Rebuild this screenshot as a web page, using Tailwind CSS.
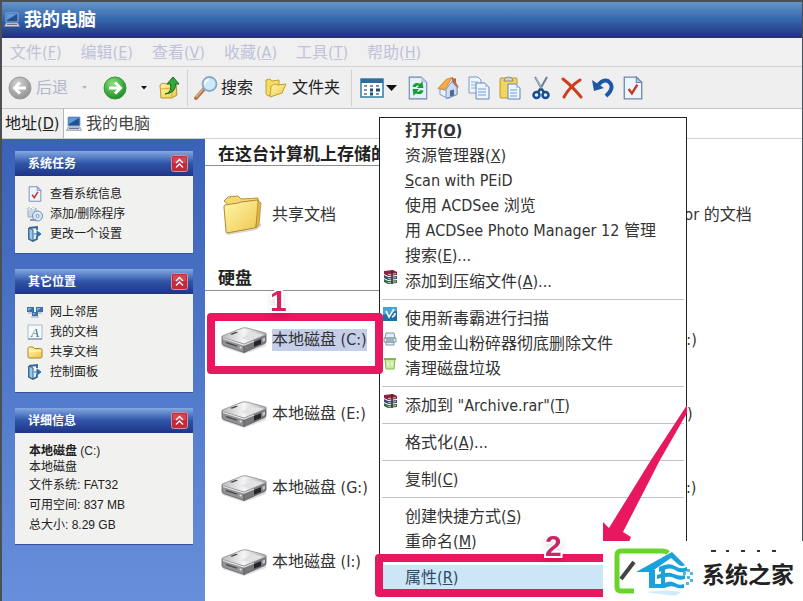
<!DOCTYPE html>
<html lang="zh-CN">
<head>
    <meta charset="UTF-8">
    <meta name="viewport" content="width=device-width, initial-scale=1.0">
    <title>我的电脑</title>
    <script src="https://cdn.jsdelivr.net/npm/@tailwindcss/browser@4"></script>
</head>
<body class="bg-white font-['DejaVu_Sans_Condensed','Noto_Sans','Noto_Sans_CJK_SC',sans-serif] text-base text-[#333]">

    <!-- Shared icons -->
    <svg class="absolute size-0" aria-hidden="true">
        <defs>
            <linearGradient id="gFolder" x1="0" y1="0" x2="1" y2="1"><stop offset="0" stop-color="#fff7ad"/><stop offset="1" stop-color="#efc64b"/></linearGradient>
            <linearGradient id="gDrive" x1="0" y1="0" x2="1" y2="0"><stop offset="0" stop-color="#b9b9bb"/><stop offset=".5" stop-color="#f5f5f5"/><stop offset="1" stop-color="#a9a9ac"/></linearGradient>
            <radialGradient id="gGreen" cx=".4" cy=".3" r=".75"><stop offset="0" stop-color="#8be07c"/><stop offset="1" stop-color="#158a1c"/></radialGradient>
            <radialGradient id="gGray" cx=".4" cy=".3" r=".75"><stop offset="0" stop-color="#d2d2d2"/><stop offset="1" stop-color="#8f8f8f"/></radialGradient>
        </defs>
        <symbol id="computer" viewBox="0 0 16 16">
            <path d="M2 1h12v9H2z" fill="#26508f" stroke="#8fb3dc"/>
            <path d="M3 2h10L3 8z" fill="#5e9ad6"/>
            <path d="M2 11h12l1.500 3.500H.5z" fill="#c9d2de" stroke="#7f8da2" stroke-width=".6"/>
            <path d="M3 12.500h10" stroke="#6c7686"/>
        </symbol>
        <symbol id="drive" viewBox="0 0 46 27">
            <path d="M1 17l22 8 22-9v3L23 27 2 20z" fill="#bbb" opacity=".5"/>
            <path d="M1 10.500L23 17v8.500L2.500 18.500Q1 18 1 16.500z" fill="#929296" stroke="#66666a" stroke-width=".8"/>
            <path d="M23 17l22-9v6.500q0 1.500-1.500 2L23 25.500z" fill="#77777b" stroke="#5a5a5e" stroke-width=".8"/>
            <path d="M1 10.500Q0 9.500 2 8.700L20 1.500q3-1.200 6-.5l17 4.500q3.500 1 2 2.500L23 17z" fill="url(#gDrive)" stroke="#8b8b8f" stroke-width=".8"/>
            <path d="M2 11.500L23 18l10-4" fill="none" stroke="#e6e6e6" stroke-width="1.200"/>
            <path d="M9 7l6-2.200 2 .6-6 2.300z" fill="#47474b"/>
            <path d="M31 5l12 2.800-14 5.800-9-2.400z" fill="#e2e2e4"/>
            <path d="M33 15l7-2.700v4.700l-7 2.800z" fill="#252529"/>
            <path d="M41.500 11.500l2.500-1v3.500l-2.500 1z" fill="#c5c5c8"/>
            <path d="M5 15.500l11 3.700" stroke="#4e4e52" stroke-width="1.400"/>
            <circle cx="19.500" cy="20.500" r="1" fill="#e8e8e8"/>
        </symbol>
        <symbol id="chevrons" viewBox="0 0 17 17">
            <rect x=".5" y=".5" width="16" height="16" rx="2" fill="#c02a3a" stroke="#d98f9a"/>
            <path d="M2 2h13v6H2z" fill="#d65362" opacity=".7"/>
            <path d="M5 8l3.500-3.500L12 8M5 12.500L8.500 9l3.500 3.500" fill="none" stroke="#fff" stroke-width="1.300"/>
        </symbol>
        <symbol id="settings" viewBox="0 0 16 16">
            <path d="M2 2l8-1v3M10 10v3l-4 2-4-2V2" fill="#dfeefa" stroke="#33658f" stroke-width="1.800"/>
            <path d="M2 2l4 2v11l-4-2z" fill="#9cc6e8" stroke="#33658f"/>
            <path d="M7 8h5M10 5l4 3-4 3z" fill="#2f6ea6" stroke="#2f6ea6"/>
        </symbol>
        <symbol id="folder" viewBox="0 0 16 14">
            <path d="M1 3.500Q1 2 2.500 2H6l1.500 1.500h6q1.500 0 1.500 1.500v6.500q0 1.500-1.500 1.500h-11Q1 13 1 11.500z" fill="url(#gFolder)" stroke="#a98421"/>
            <path d="M1.500 6h13" stroke="#fffbd0"/>
        </symbol>
        <symbol id="check" viewBox="0 0 18 22">
            <path d="M1 1h11l5 5v15H1z" fill="#eef4fc" stroke="#6f86ad" stroke-width="1.200"/>
            <path d="M12 1v5h5z" fill="#b9cbe6" stroke="#6f86ad"/>
            <path d="M5 12l3 4 5-8" fill="none" stroke="#c9362a" stroke-width="2.200"/>
        </symbol>
        <symbol id="rar" viewBox="0 0 14 14">
            <path d="M1 1l9-1 4 2v3L5 6 1 4z" fill="#8d2440"/>
            <path d="M1 5l4 2 9-1v3l-9 1-4-2z" fill="#3b4a78"/>
            <path d="M1 9l4 2 9-1v3l-9 1-4-2z" fill="#316a3f"/>
            <path d="M5 4.500l8-.8M5 8.500l8-.8M5 12.500l8-.8" stroke="#e7d9d9" stroke-width=".8"/>
            <path d="M8 0l2 .5V14H8z" fill="#3a2522" opacity=".7"/>
        </symbol>
    </svg>

    <div class="relative flex h-screen flex-col overflow-hidden border-t-2 border-r border-l-2 border-[#4b5054]">

        <!-- Title bar -->
        <header class="flex h-9 shrink-0 items-center gap-1 bg-linear-to-b from-[#6594c8] via-[#3365ab] to-[#232f7d] pl-[2px] text-white">
            <svg class="size-4"><use href="#computer"/></svg>
            <h1 class="text-lg leading-6 font-bold">我的电脑</h1>
        </header>

        <!-- Menu bar -->
        <nav class="flex h-[29px] shrink-0 items-center gap-[19px] border-b border-[#d4d4d4] bg-[#f0f0f1] pt-px pl-2 text-[#bfc2d8]">
            <button>文件(<u>F</u>)</button>
            <button>编辑(<u>E</u>)</button>
            <button>查看(<u>V</u>)</button>
            <button>收藏(<u>A</u>)</button>
            <button>工具(<u>T</u>)</button>
            <button>帮助(<u>H</u>)</button>
        </nav>

        <!-- Toolbar -->
        <div class="flex h-[42px] shrink-0 items-center border-b border-[#c4c4c4] bg-[#efeff0] pl-[6px] text-[#222]">
            <button class="flex items-center gap-1 text-[#b3b7cb]">
                <svg class="size-6" viewBox="0 0 24 24"><circle cx="12" cy="12" r="11" fill="url(#gGray)" stroke="#9a9a9a"/><path d="M18 12H7m5-5.500L6.500 12l5.500 5.500" fill="none" stroke="#fff" stroke-width="3"/></svg>
                后退
            </button>
            <button class="ml-3 w-[12px]" aria-label="后退列表"><svg class="w-[9px]" viewBox="0 0 9 5"><path d="M2 1h5L4.500 4z" fill="#b5b5b5"/></svg></button>
            <button class="ml-[11px]" aria-label="前进"><svg class="size-6" viewBox="0 0 24 24"><circle cx="12" cy="12" r="11" fill="url(#gGreen)" stroke="#2d9b35"/><path d="M6 12h11m-5-5.500l5.500 5.500-5.500 5.500" fill="none" stroke="#fff" stroke-width="3"/></svg></button>
            <button class="ml-3" aria-label="前进列表"><svg class="w-[9px]" viewBox="0 0 9 5"><path d="M2 1h6L5 4.500z" fill="#111"/></svg></button>
            <button class="ml-[11px]" aria-label="向上">
                <svg class="h-6 w-[22px]" viewBox="0 0 22 24"><path d="M1 9l3-2 3 1 10-1 1 12-5 3H2z" fill="url(#gFolder)" stroke="#b9952f"/><path d="M1 13l12-1v10" fill="none" stroke="#d5ae45"/><path d="M6 18q7-1 5.500-10H8l6-7 6 7h-3.500Q17 17 6 18z" fill="#35a83b" stroke="#136d1e"/></svg>
            </button>
            <span class="mx-[6px] h-9 w-px bg-[#d2d2d2]"></span>
            <button class="flex items-center gap-[3px]">
                <svg class="size-6" viewBox="0 0 24 24"><path d="M2 22l8-9" stroke="#b27850" stroke-width="4" stroke-linecap="round"/><path d="M2 21l7-8" stroke="#e0b08a" stroke-width="1.500"/><circle cx="15.500" cy="8" r="7" fill="#c9ecf8" stroke="#8ba9c4" stroke-width="1.800"/><path d="M11 8q0-4 4-4.500" stroke="#fff" stroke-width="2" fill="none"/></svg>
                搜索
            </button>
            <button class="ml-3 flex items-center gap-[5px]">
                <svg class="h-6 w-[22px]" viewBox="0 0 22 22"><path d="M1 3l4-1 2 2 7-1v13L3 19 1 17z" fill="#f5dc63" stroke="#c3a02f"/><path d="M6 9l4-2 2 1 9-1-4 9-12 4z" fill="url(#gFolder)" stroke="#c3a02f"/></svg>
                文件夹
            </button>
            <span class="mr-2 ml-[11px] h-9 w-px bg-[#d2d2d2]"></span>
            <button class="flex items-center gap-[2px]" aria-label="查看">
                <svg class="h-5 w-6" viewBox="0 0 24 20"><path d="M1 1h22v18H1z" fill="#fff" stroke="#2f7fa3" stroke-width="1.500"/><path d="M1 1h22v4H1z" fill="#2d6e9d"/><path d="M4 8h3M10 8h3M16 8h3M4 12h3M4 16h3M16 16h3" stroke="#83919b" stroke-width="2"/><path d="M10 12h3M16 12h4M10 16h3" stroke="#1d4f68" stroke-width="3"/></svg>
                <svg class="w-[11px]" viewBox="0 0 11 6"><path d="M0 0h11L5.500 6z" fill="#111"/></svg>
            </button>
            <div class="ml-[11px] flex items-center gap-[9px]">
                <button aria-label="刷新"><svg class="h-6 w-5" viewBox="0 0 18 22"><path d="M1 1h11l5 5v15H1z" fill="#e6f0fb" stroke="#6f86ad"/><path d="M12 1v5h5z" fill="#b9cbe6"/><path d="M4 10q1-5 7-3l2-2 1 6H8l2-2q-2-1-3 1zM14 13q-1 5-7 3l-2 2-1-6h6l-2 2q2 1 3-1z" fill="#189c34"/></svg></button>
                <button aria-label="主页"><svg class="h-6 w-[22px]" viewBox="0 0 22 23"><path d="M15 2h4v7h-4z" fill="#b0604a"/><path d="M3 12l6 2 6-9 5 6v7l-9 4-8-4z" fill="#edf3fc" stroke="#7e95c2"/><path d="M9 13v9l11-4v-7l-5-6z" fill="#cddcf3" stroke="#7e95c2"/><path d="M1 12L9 3l6-2-7 12z" fill="#f2ad4a" stroke="#d38b31"/><path d="M15 1l6 10" stroke="#bd684c" stroke-width="1.500"/><path d="M13 14l4-1v6l-4 1z" fill="#51678d"/></svg></button>
                <button aria-label="复制"><svg class="h-6 w-[22px]" viewBox="0 0 22 24"><path d="M1 1h9l3 3v13H1z" fill="#eef5fe" stroke="#7b9cc8"/><path d="M3 6h7M3 9h5M3 12h5" stroke="#8eb0db"/><path d="M8 7h9l4 4v12H8z" fill="#eef5fe" stroke="#5f86ba"/><path d="M17 7v4h4z" fill="#b3cae8"/><path d="M10 13h8M10 16h8M10 19h8" stroke="#6e9bd0"/></svg></button>
                <button aria-label="粘贴"><svg class="h-6 w-[22px]" viewBox="0 0 22 24"><rect x="1" y="2" width="17" height="20" rx="1" fill="#f1d55c" stroke="#b69835"/><path d="M5 4q1-3 4.500-3T14 4v1H5z" fill="#d3d4cd" stroke="#8f8b70"/><path d="M9 8h8l4 4v11H9z" fill="#eef5fe" stroke="#5f86ba"/><path d="M17 8v4h4z" fill="#b3cae8"/><path d="M11 14h7M11 17h7M11 20h7" stroke="#6e9bd0"/></svg></button>
                <button aria-label="剪切"><svg class="h-6 w-[22px]" viewBox="0 0 20 24"><path d="M4 1l8 14M16 1L8 15" stroke="#6b7c93" stroke-width="2"/><path d="M4.500 2l6 10" stroke="#d8e0ea" stroke-width=".7"/><path d="M9.500 13L7 16M10.500 13l2.500 3" stroke="#174d93" stroke-width="2.500"/><circle cx="5.500" cy="19" r="3" fill="none" stroke="#174d93" stroke-width="2.500"/><circle cx="14.500" cy="19" r="3" fill="none" stroke="#174d93" stroke-width="2.500"/></svg></button>
                <button aria-label="删除"><svg class="h-6 w-[22px]" viewBox="0 0 22 22"><path d="M2 2q9 7 18 18M19 3Q9 9 3 20" fill="none" stroke="#cf3d1f" stroke-width="3" stroke-linecap="round"/></svg></button>
                <button aria-label="撤消"><svg class="h-6 w-[22px]" viewBox="0 0 22 22"><path d="M5 10q5-8 11-6 8 6-2 15" fill="none" stroke="#1d57a8" stroke-width="4"/><path d="M0 3l2 11 10-3z" fill="#1d57a8"/></svg></button>
                <button aria-label="属性"><svg class="h-6 w-5"><use href="#check"/></svg></button>
            </div>
        </div>

        <!-- Address bar -->
        <div class="flex h-[30px] shrink-0 items-stretch border-b border-[#cfcfcf] bg-[#f0f0f1] text-[#222]">
            <label for="address" class="flex w-[61px] items-center pl-[3px]">地址(<u>D</u>)</label>
            <div class="flex flex-1 items-center gap-1 border-l border-[#b5b5b5] bg-white pl-[2px]">
                <svg class="size-4"><use href="#computer"/></svg>
                <input id="address" type="text" value="我的电脑" class="min-w-0 flex-1 text-[#444] outline-none">
            </div>
        </div>

        <div class="flex min-h-0 flex-1">

            <!-- Task pane -->
            <aside class="flex w-[203px] shrink-0 flex-col gap-[15px] bg-linear-to-b from-[#3962b8] to-[#678fdb] pt-3 pr-3 pl-[13px] font-['Liberation_Sans','Noto_Sans_CJK_SC',sans-serif] text-xs text-[#222]">
                <section class="border-b border-[#35539c] bg-[#f1f1f0]">
                    <div class="flex h-[25px] items-center justify-between bg-linear-to-b from-[#86a9e2] via-[#2f55a8] to-[#1f3485] pr-[5px] pl-[13px] text-white">
                        <h2 class="font-bold">系统任务</h2>
                        <button aria-label="折叠"><svg class="size-[17px]"><use href="#chevrons"/></svg></button>
                    </div>
                    <ul class="pt-2 pb-[9px] pl-3">
                        <li><a href="#" class="flex h-5 items-center gap-[7px]"><svg class="size-4"><use href="#check"/></svg>查看系统信息</a></li>
                        <li><a href="#" class="flex h-5 items-center gap-[7px]"><svg class="size-4" viewBox="0 0 16 16"><path d="M1 2h8v9H1z" fill="#c9d8e8" stroke="#9aabc0"/><path d="M1 4l3-3 2 2 3-2" fill="none" stroke="#fff"/><circle cx="10.500" cy="10" r="5" fill="#d9e6f2" stroke="#6c8fb5"/><circle cx="10.500" cy="10" r="1.500" fill="#fff" stroke="#6c8fb5"/><path d="M3 14h6" stroke="#8b9cb0" stroke-width="2"/></svg>添加/删除程序</a></li>
                        <li><a href="#" class="flex h-5 items-center gap-[7px]"><svg class="size-4"><use href="#settings"/></svg>更改一个设置</a></li>
                    </ul>
                </section>
                <section class="border-b border-[#35539c] bg-[#f1f1f0]">
                    <div class="flex h-[25px] items-center justify-between bg-linear-to-b from-[#86a9e2] via-[#2f55a8] to-[#1f3485] pr-[5px] pl-[13px] text-white">
                        <h2 class="font-bold">其它位置</h2>
                        <button aria-label="折叠"><svg class="size-[17px]"><use href="#chevrons"/></svg></button>
                    </div>
                    <ul class="pt-2 pb-[10px] pl-3">
                        <li><a href="#" class="flex h-5 items-center gap-[7px]"><svg class="size-4" viewBox="0 0 16 16"><path d="M0 3h7v5H0zM9 3h7v5H9zM5 8h6v4H5z" fill="#3b6fa8"/><path d="M1 4h4L1 7zM10 4h4l-4 3zM6 9h3l-3 2z" fill="#86b5e0"/><path d="M1 9h4M11 9h4M4 13h8" stroke="#8fa2b8"/></svg>网上邻居</a></li>
                        <li><a href="#" class="flex h-5 items-center gap-[7px]"><svg class="size-4" viewBox="0 0 16 16"><path d="M1 1h14v14H1z" fill="#f7fafd" stroke="#a9bccd"/><path d="M1 15h14" stroke="#6d8397"/><text x="4" y="13" font-family="Liberation Serif" font-size="13" font-style="italic" fill="#3b6e92">A</text></svg>我的文档</a></li>
                        <li><a href="#" class="flex h-5 items-center gap-[7px]"><svg class="size-4"><use href="#folder"/></svg>共享文档</a></li>
                        <li><a href="#" class="flex h-5 items-center gap-[7px]"><svg class="size-4"><use href="#settings"/></svg>控制面板</a></li>
                    </ul>
                </section>
                <section class="border-b border-[#35539c] bg-[#f1f1f0]">
                    <div class="flex h-[25px] items-center justify-between bg-linear-to-b from-[#86a9e2] via-[#2f55a8] to-[#1f3485] pr-[5px] pl-[13px] text-white">
                        <h2 class="font-bold">详细信息</h2>
                        <button aria-label="折叠"><svg class="size-[17px]"><use href="#chevrons"/></svg></button>
                    </div>
                    <div class="pt-[10px] pb-[9px] pl-[14px] leading-5">
                        <p class="leading-4"><b>本地磁盘</b> (C:)</p>
                        <p class="leading-4">本地磁盘</p>
                        <p>文件系统: FAT32</p>
                        <p>可用空间: 837 MB</p>
                        <p>总大小: 8.29 GB</p>
                    </div>
                </section>
            </aside>

            <!-- Folder view -->
            <main class="min-w-0 flex-1 bg-white">
                <h2 class="w-1/2 border-b border-[#8a8f98] pt-1 pl-[13px] text-[17px] leading-[22px] font-bold whitespace-nowrap text-[#222]">在这台计算机上存储的文件</h2>
                <div class="grid auto-rows-[74px] grid-cols-[329px_1fr] items-center pt-3 pl-4">
                    <a href="#" class="flex items-center gap-[5px]">
                        <svg class="h-10 w-[46px]" viewBox="0 0 46 40"><path d="M5 38l30-6 5-4v3l-5 4-28 5z" fill="#bbb" opacity=".6"/><path d="M3 6l4-4 10-1 3 3 17-1 1 23-4 7z" fill="#f3d873" stroke="#b89535"/><path d="M4 10l13-2 3-1 16-2q2 0 2 2l-3 24q0 2-2 2L6 38q-1 0-1-2L3 12q0-2 1-2z" fill="url(#gFolder)" stroke="#b08a2c"/><path d="M37 5l3 3-2 22-3 3z" fill="#dfb546" stroke="#a67f25" stroke-width=".6"/></svg>
                        共享文档
                    </a>
                    <a href="#" class="flex items-center gap-[5px]">
                        <svg class="h-10 w-[46px]" viewBox="0 0 16 14"><use href="#folder"/></svg>
                        <span class="whitespace-nowrap">Administrator 的文档</span>
                    </a>
                </div>
                <h2 class="mt-[15px] w-1/2 border-b border-[#8a8f98] pl-[13px] text-[17px] leading-[23px] font-bold text-[#222]">硬盘</h2>
                <div class="grid auto-rows-[74px] grid-cols-[329px_1fr] items-center pt-3 pl-4">
                    <a href="#" class="flex items-center gap-[5px]"><svg class="h-[27px] w-[46px]"><use href="#drive"/></svg><span class="bg-[#c5cfea] leading-[22px]">本地磁盘 (C:)</span></a>
                    <a href="#" class="flex items-center gap-[5px]"><svg class="h-[27px] w-[46px]"><use href="#drive"/></svg>本地磁盘 (D:)</a>
                    <a href="#" class="flex items-center gap-[5px]"><svg class="h-[27px] w-[46px]"><use href="#drive"/></svg>本地磁盘 (E:)</a>
                    <a href="#" class="flex items-center gap-[5px]"><svg class="h-[27px] w-[46px]"><use href="#drive"/></svg>本地磁盘 (F:)</a>
                    <a href="#" class="flex items-center gap-[5px]"><svg class="h-[27px] w-[46px]"><use href="#drive"/></svg>本地磁盘 (G:)</a>
                    <a href="#" class="flex items-center gap-[5px]"><svg class="h-[27px] w-[46px]"><use href="#drive"/></svg>本地磁盘 (H:)</a>
                    <a href="#" class="flex items-center gap-[5px]"><svg class="h-[27px] w-[46px]"><use href="#drive"/></svg>本地磁盘 (I:)</a>
                </div>
            </main>
        </div>

        <!-- Context menu -->
        <div class="absolute top-[115px] left-[377px] flex w-[308px] flex-col border border-[#222] bg-white pb-px leading-[25px]" role="menu">
            <button class="pl-[25px] text-left font-bold" role="menuitem">打开(<u>O</u>)</button>
            <button class="pl-[25px] text-left" role="menuitem">资源管理器(<u>X</u>)</button>
            <button class="pl-[25px] text-left" role="menuitem"><u>S</u>can with PEiD</button>
            <button class="pl-[25px] text-left" role="menuitem">使用 ACDSee 浏览</button>
            <button class="pl-[25px] text-left" role="menuitem">用 ACDSee Photo Manager 12 管理</button>
            <button class="pl-[25px] text-left" role="menuitem">搜索(<u>E</u>)...</button>
            <button class="flex gap-2 pt-px pl-[3px]" role="menuitem"><svg class="mt-px size-[14px]"><use href="#rar"/></svg><span>添加到压缩文件(<u>A</u>)...</span></button>
            <hr class="mx-[2px] mt-[5px] mb-[6px] border-[#c4c4c4]">
            <button class="flex gap-2 pl-[3px]" role="menuitem"><svg class="mt-px size-[14px]" viewBox="0 0 14 14"><path d="M0 0h14v14H0z" fill="#1f6fa5"/><path d="M0 0h14v4L0 8z" fill="#45a5d3"/><path d="M3 4l3 6 5-8M9 10q3-1 3-4" fill="none" stroke="#e8f6ff" stroke-width="1.800"/></svg>使用新毒霸进行扫描</button>
            <button class="flex gap-2 pl-[3px]" role="menuitem"><svg class="mt-px size-[14px]" viewBox="0 0 14 14"><path d="M3 1h8l1 5H2zM1 6h12v4H1zM3 10h8v3H3z" fill="#e3edf3" stroke="#7d98a8"/><path d="M3 8h8" stroke="#5b7d90"/></svg>使用金山粉碎器彻底删除文件</button>
            <button class="flex gap-2 pl-[3px]" role="menuitem"><svg class="mt-px size-[14px]" viewBox="0 0 14 14"><path d="M2 2h10l-1 10H3z" fill="#c8eba0" stroke="#7cbd4a"/><path d="M1 2h12" stroke="#6bb03a" stroke-width="1.500"/><path d="M5 5v4M9 5v4" stroke="#fff"/></svg>清理磁盘垃圾</button>
            <hr class="mx-[2px] mt-[5px] mb-[6px] border-[#c4c4c4]">
            <button class="flex gap-2 pl-[3px]" role="menuitem"><svg class="mt-px size-[14px]"><use href="#rar"/></svg><span>添加到 "Archive.rar"(<u>T</u>)</span></button>
            <hr class="mx-[2px] mt-[5px] mb-[6px] border-[#c4c4c4]">
            <button class="pl-[25px] text-left" role="menuitem">格式化(<u>A</u>)...</button>
            <hr class="mx-[2px] mt-[5px] mb-[6px] border-[#c4c4c4]">
            <button class="pl-[25px] text-left" role="menuitem">复制(<u>C</u>)</button>
            <hr class="mx-[2px] mt-[5px] mb-[6px] border-[#c4c4c4]">
            <button class="pl-[25px] text-left" role="menuitem">创建快捷方式(<u>S</u>)</button>
            <button class="pl-[25px] text-left" role="menuitem">重命名(<u>M</u>)</button>
            <hr class="mx-[2px] mt-[5px] mb-[5px] border-[#c4c4c4]">
            <button class="bg-[#cce6f6] pl-[25px] text-left text-[#2c4a66]" role="menuitem">属性(<u>R</u>)</button>
        </div>

        <!-- Step markers -->
        <div class="absolute top-[311px] left-[205px] h-[61px] w-[176px] rounded-[4px] border-8 border-[#e81860]"></div>
        <div class="absolute top-[552px] left-[373px] h-[43px] w-[240px] rounded-[4px] border-8 border-[#e81860]"></div>
        <svg class="absolute top-[280px] left-[263px] h-9 w-8 drop-shadow-md" viewBox="0 0 32 36"><text x="5" y="29" font-family="Liberation Sans" font-size="30" font-weight="bold" fill="#d6225f" stroke="#fff" stroke-width="4" paint-order="stroke">1</text></svg>
        <svg class="absolute top-[525px] left-[538px] h-9 w-8 drop-shadow-md" viewBox="0 0 32 36"><text x="5" y="29" font-family="Liberation Sans" font-size="30" font-weight="bold" fill="#c8286a" stroke="#fff" stroke-width="4" paint-order="stroke">2</text></svg>
        <svg class="absolute top-[403px] left-[601px] h-[137px] w-[84px]" viewBox="0 0 84 137"><path d="M84 0v8L57 55 20 127l8 5-2 5H0v-20l6 6L48 55z" fill="#e81860"/></svg>
    </div>

    <!-- Site badge -->
    <div class="absolute right-0 bottom-0 flex h-[60px] w-[200px] items-center bg-white">
        <svg class="h-[60px] w-[97px] shrink-0" viewBox="0 0 97 60">
            <path d="M65 12q-2-2-6-2H18q-4 0-4 4v32q0 4 4 4h13" fill="none" stroke="#6bd42c" stroke-width="5"/>
            <path d="M18 38l13-17" stroke="#444" stroke-width="4"/>
            <path d="M33 31L69 11l13 13q-3 2-6 0l-8-7-20 14z" fill="#1ba1dc"/>
            <path d="M46 29h6v14h9v4H46zM56 26q10-5 16-1t12 1v4q-7 3-12-1t-16 2zM54 34q10-4 17-1t11 1v4q-6 2-11-1t-17 1z" fill="#1ba1dc"/>
            <path d="M58 28h4v18h-4zM61 42q7-3 11 0t9 1v4q-5 1-9-1t-11 1z" fill="#1ba1dc"/>
            <path d="M84 28h3v3h-3zM87 31h3v3h-3zM84 35h3v3h-3zM87 38h3v3h-3zM83 41h3v3h-3zM80 31h3v3h-3z" fill="#4fb9e6"/>
            <path d="M43 51q20-3 35 0-4 5-12 3-12-1-23-3z" fill="#1ba1dc" opacity=".2"/>
        </svg>
        <span class="mt-2 ml-[2px] text-[23px] leading-8 font-bold whitespace-nowrap text-[#222]">系统之家</span>
        <svg class="absolute top-[9px] right-[26px] h-[3px] w-[66px]" viewBox="0 0 66 3"><path d="M0 1h5M15 1h3M30 1h4M46 1h3M61 1h4" stroke="#333" stroke-width="2"/></svg>
    </div>
</body>
</html>
